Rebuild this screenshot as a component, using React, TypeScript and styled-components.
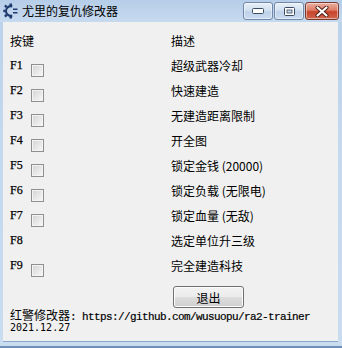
import React from "react";
import styled, { createGlobalStyle } from "styled-components";

const GlobalStyle = createGlobalStyle`
  html, body { margin: 0; padding: 0; background: #f0f0f0; }
  body { font-family: "Noto Sans CJK SC", "Noto Sans", sans-serif; }
`;

const Window = styled.div`
  width: 342px;
  height: 348px;
  box-sizing: border-box;
  display: flex;
  flex-direction: column;
  background: linear-gradient(to bottom, #b9d1ea 0%, #c4d8ee 40%, #c9dcf0 100%);
  padding: 0 4px 4px 3px;
  border-bottom: 2px solid #6d8fb8;
  overflow: hidden;
`;

const TitleBar = styled.div`
  height: 22px;
  flex: none;
  display: flex;
  align-items: flex-start;
  margin-left: -3px;
  margin-right: -4px;
  padding-left: 3px;
  background: linear-gradient(to bottom, #b5cde8 0%, #bfd4ec 50%, #c6daef 100%);
`;

const AppIcon = styled.svg`
  width: 16px;
  height: 16px;
  margin-top: 3px;
  flex: none;
`;

const Title = styled.div`
  margin-left: 3px;
  font-size: 12px;
  line-height: 22px;
  color: #000;
  white-space: nowrap;
`;

const Controls = styled.div`
  margin-left: auto;
  margin-right: 3px;
  margin-top: 2px;
  display: flex;
  gap: 1px;
`;

const CtrlButton = styled.div<{ $close?: boolean; $w: number }>`
  width: ${(p) => p.$w}px;
  height: 18px;
  box-sizing: border-box;
  border: 1px solid ${(p) => (p.$close ? "#7a3a2e" : "#7188a8")};
  border-radius: 3px;
  display: flex;
  align-items: center;
  justify-content: center;
  background: ${(p) =>
    p.$close
      ? "linear-gradient(to bottom, #eab0a2 0%, #dd7b64 45%, #c8432a 55%, #d0684f 100%)"
      : "linear-gradient(to bottom, #e8f0f9 0%, #d3e1f1 45%, #bfd2ea 55%, #cbdcf0 100%)"};
  box-shadow: inset 0 0 0 1px rgba(255, 255, 255, 0.45);
`;

const Client = styled.div`
  flex: 1;
  background: #f0f0f0;
  padding: 6px 0 0 7px;
  border-bottom: 1px solid #8aa7c9;
  display: flex;
  flex-direction: column;
`;

const Table = styled.div`
  display: grid;
  grid-template-columns: 161px 1fr;
  grid-auto-rows: 25px;
  align-items: center;
`;

const HeadCell = styled.div`
  font-size: 12px;
  color: #000;
  line-height: 14px;
`;

const KeyCell = styled.div`
  display: flex;
  align-items: center;
  height: 25px;
`;

const KeyLabel = styled.span`
  width: 21px;
  font-family: "Liberation Serif", serif;
  font-size: 12px;
  color: #000;
  -webkit-text-stroke: 0.25px #000;
`;

const Check = styled.input.attrs({ type: "checkbox" })`
  appearance: none;
  -webkit-appearance: none;
  margin: 9px 0 0 0;
  width: 13px;
  height: 13px;
  box-sizing: border-box;
  border: 1px solid #8f8f8f;
  background: linear-gradient(135deg, #d2d2d2 0%, #e6e6e6 50%, #f8f8f8 100%);
  box-shadow: inset 0 0 0 1px #f4f4f4;
`;

const Desc = styled.div`
  font-size: 12px;
  color: #000;
  line-height: 14px;
  white-space: nowrap;
`;

const ButtonRow = styled.div`
  display: grid;
  grid-template-columns: 161px 1fr;
  margin-top: 8px;
`;

const ExitButton = styled.button`
  grid-column: 2;
  margin-left: 2px;
  width: 71px;
  height: 22px;
  padding: 0;
  border: 1px solid #707070;
  border-radius: 3px;
  background: linear-gradient(to bottom, #f2f2f2 0%, #ebebeb 50%, #dddddd 50%, #cfcfcf 100%);
  box-shadow: inset 0 0 0 1px #fcfcfc;
  font-family: "Noto Sans CJK SC", sans-serif;
  font-size: 12px;
  color: #000;
`;

const Footer = styled.div`
  display: flex;
  flex-direction: column;
  line-height: 13px;
  color: #000;
`;

const FooterLine = styled.div`
  white-space: nowrap;
  display: flex;
  align-items: baseline;
  height: 13px;
`;

const CjkText = styled.span`
  font-size: 12px;
`;

const MonoText = styled.span`
  font-family: "Liberation Mono", monospace;
  font-size: 11px;
  letter-spacing: -0.6px;
  -webkit-text-stroke: 0.2px #000;
`;

const DateText = styled.span`
  font-family: "DejaVu Sans Mono", monospace;
  font-size: 10px;
`;

const rows: { key: string; desc: string; check: boolean }[] = [
  { key: "F1", desc: "超级武器冷却", check: true },
  { key: "F2", desc: "快速建造", check: true },
  { key: "F3", desc: "无建造距离限制", check: true },
  { key: "F4", desc: "开全图", check: true },
  { key: "F5", desc: "锁定金钱 (20000)", check: true },
  { key: "F6", desc: "锁定负载 (无限电)", check: true },
  { key: "F7", desc: "锁定血量 (无敌)", check: true },
  { key: "F8", desc: "选定单位升三级", check: false },
  { key: "F9", desc: "完全建造科技", check: true },
];

export default function App() {
  return (
    <>
      <GlobalStyle />
      <Window>
        <TitleBar>
          <AppIcon viewBox="0 0 16 16">
            <g fill="#1f3b6e">
              <path d="M9.5 2.2 A6 6 0 1 0 9.5 13.8 L9 11.6 A3.8 3.8 0 1 1 9 4.4 Z" />
              <rect x="6.5" y="0.5" width="2.5" height="2.5" />
              <rect x="6.5" y="13" width="2.5" height="2.5" />
              <rect x="0.3" y="6.7" width="2.5" height="2.5" />
              <rect x="1.6" y="2" width="2.4" height="2.4" transform="rotate(45 2.8 3.2)" />
              <rect x="1.6" y="11.6" width="2.4" height="2.4" transform="rotate(45 2.8 12.8)" />
              <path d="M10 5.5 L14.5 5.5 L14.5 7 L10 7 Z" />
              <path d="M10 9 L14.5 9 L14.5 10.5 L10 10.5 Z" />
            </g>
          </AppIcon>
          <Title>尤里的复仇修改器</Title>
          <Controls>
            <CtrlButton $w={30}>
              <svg width="12" height="6" viewBox="0 0 12 6">
                <rect x="0.5" y="0.5" width="11" height="5" rx="1" fill="#fff" stroke="#3a4a60" />
              </svg>
            </CtrlButton>
            <CtrlButton $w={30}>
              <svg width="11" height="9" viewBox="0 0 11 9">
                <rect x="0.5" y="0.5" width="10" height="8" rx="1" fill="#fff" stroke="#3a4a60" />
                <rect x="3" y="3" width="5" height="3" fill="#c9d8ec" stroke="#3a4a60" strokeWidth="0.8" />
              </svg>
            </CtrlButton>
            <CtrlButton $w={34} $close>
              <svg width="14" height="11" viewBox="0 0 14 11">
                <path d="M2.5 1.5 L11.5 9.5 M11.5 1.5 L2.5 9.5" stroke="#4a1c14" strokeWidth="4" strokeLinecap="round" />
                <path d="M2.5 1.5 L11.5 9.5 M11.5 1.5 L2.5 9.5" stroke="#fff" strokeWidth="2.2" strokeLinecap="round" />
              </svg>
            </CtrlButton>
          </Controls>
        </TitleBar>
        <Client>
          <Table>
            <HeadCell>按键</HeadCell>
            <HeadCell>描述</HeadCell>
            {rows.map((r) => (
              <React.Fragment key={r.key}>
                <KeyCell>
                  <KeyLabel>{r.key}</KeyLabel>
                  {r.check && <Check />}
                </KeyCell>
                <Desc>{r.desc}</Desc>
              </React.Fragment>
            ))}
          </Table>
          <ButtonRow>
            <ExitButton>退出</ExitButton>
          </ButtonRow>
          <Footer>
            <FooterLine>
              <CjkText>红警修改器</CjkText>
              <MonoText>: https://github.com/wusuopu/ra2-trainer</MonoText>
            </FooterLine>
            <FooterLine>
              <DateText>2021.12.27</DateText>
            </FooterLine>
          </Footer>
        </Client>
      </Window>
    </>
  );
}
